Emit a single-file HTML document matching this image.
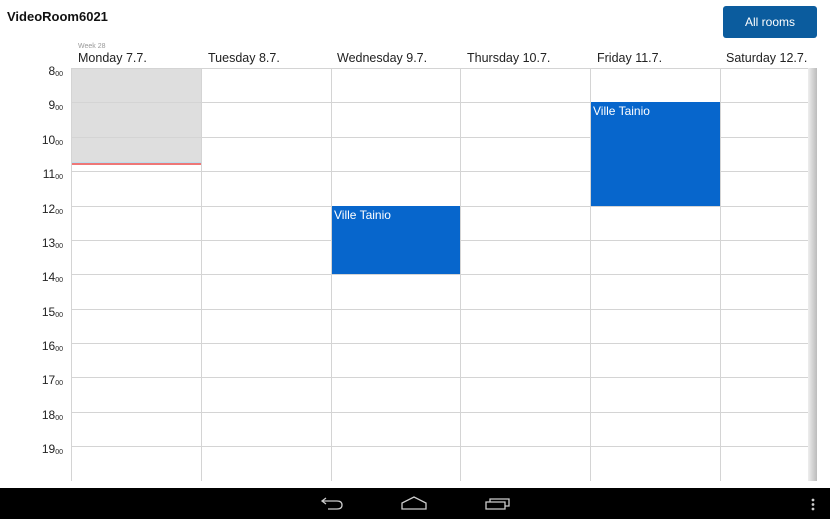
<!DOCTYPE html>
<html><head><meta charset="utf-8"><style>
body{margin:0;width:830px;height:519px;overflow:hidden;background:#fff;font-family:"Liberation Sans",sans-serif;position:relative}
.a{position:absolute}
.h{font-size:12px;color:#222}
.h sup{font-size:7px;vertical-align:-1px}
</style></head><body>
<div class="a" style="left:7px;top:9px;font-size:13px;font-weight:bold;color:#111">VideoRoom6021</div>
<div class="a" style="left:723px;top:6px;width:94px;height:32px;background:#0b5c9e;border-radius:3px;color:#fff;font-size:12px;text-align:center;line-height:32px">All rooms</div>
<div class="a" style="left:78px;top:43px;font-size:7px;color:#999">Week 28</div>
<div class="a" style="left:78px;top:51px;font-size:12.5px;color:#222">Monday 7.7.</div>
<div class="a" style="left:208px;top:51px;font-size:12.5px;color:#222">Tuesday 8.7.</div>
<div class="a" style="left:337px;top:51px;font-size:12.5px;color:#222">Wednesday 9.7.</div>
<div class="a" style="left:467px;top:51px;font-size:12.5px;color:#222">Thursday 10.7.</div>
<div class="a" style="left:597px;top:51px;font-size:12.5px;color:#222">Friday 11.7.</div>
<div class="a" style="left:726px;top:51px;font-size:12.5px;color:#222">Saturday 12.7.</div>
<div class="a" style="left:72px;top:68px;width:129px;height:95px;background:#dedede"></div>
<svg class="a" style="left:0;top:0" width="830" height="519">
<g stroke="#d4d4d4" stroke-width="1">
<line x1="71" y1="68.5" x2="808" y2="68.5"/>
<line x1="71" y1="102.5" x2="808" y2="102.5"/><line x1="71" y1="137.5" x2="808" y2="137.5"/>
<line x1="71" y1="171.5" x2="808" y2="171.5"/><line x1="71" y1="206.5" x2="808" y2="206.5"/>
<line x1="71" y1="240.5" x2="808" y2="240.5"/><line x1="71" y1="274.5" x2="808" y2="274.5"/>
<line x1="71" y1="309.5" x2="808" y2="309.5"/><line x1="71" y1="343.5" x2="808" y2="343.5"/>
<line x1="71" y1="377.5" x2="808" y2="377.5"/><line x1="71" y1="412.5" x2="808" y2="412.5"/>
<line x1="71" y1="446.5" x2="808" y2="446.5"/>
<line x1="71.5" y1="68" x2="71.5" y2="481"/><line x1="201.5" y1="68" x2="201.5" y2="481"/>
<line x1="331.5" y1="68" x2="331.5" y2="481"/><line x1="460.5" y1="68" x2="460.5" y2="481"/>
<line x1="590.5" y1="68" x2="590.5" y2="481"/><line x1="720.5" y1="68" x2="720.5" y2="481"/>
</g>
<line x1="72" y1="162.5" x2="201" y2="162.5" stroke="#bde" stroke-width="1"/>
<line x1="72" y1="164" x2="201" y2="164" stroke="#e77" stroke-width="2"/>
<defs><linearGradient id="g"><stop offset="0" stop-color="#eee"/><stop offset="1" stop-color="#bbb"/></linearGradient></defs>
<rect x="808" y="68" width="9" height="413" fill="url(#g)"/>
</svg>
<div class="a" style="left:332px;top:206px;width:128px;height:68px;background:#0766cc;color:#fff;font-size:12px;padding:2px 0 0 2px;box-sizing:border-box">Ville Tainio</div>
<div class="a" style="left:591px;top:102px;width:129px;height:104px;background:#0766cc;color:#fff;font-size:12px;padding:2px 0 0 2px;box-sizing:border-box">Ville Tainio</div>
<div class="h a" style="right:767px;top:64px">8<sup>00</sup></div>
<div class="h a" style="right:767px;top:98px">9<sup>00</sup></div>
<div class="h a" style="right:767px;top:133px">10<sup>00</sup></div>
<div class="h a" style="right:767px;top:167px">11<sup>00</sup></div>
<div class="h a" style="right:767px;top:202px">12<sup>00</sup></div>
<div class="h a" style="right:767px;top:236px">13<sup>00</sup></div>
<div class="h a" style="right:767px;top:270px">14<sup>00</sup></div>
<div class="h a" style="right:767px;top:305px">15<sup>00</sup></div>
<div class="h a" style="right:767px;top:339px">16<sup>00</sup></div>
<div class="h a" style="right:767px;top:373px">17<sup>00</sup></div>
<div class="h a" style="right:767px;top:408px">18<sup>00</sup></div>
<div class="h a" style="right:767px;top:442px">19<sup>00</sup></div>
<div class="a" style="left:0;top:488px;width:830px;height:31px;background:#000"></div>
<svg class="a" style="left:0;top:488px" width="830" height="31" fill="none" stroke="#ccc" stroke-width="1.3">
<path d="M326 10 L322 13 L326 16 M322 13 H337 Q342 13 342 17 Q342 21 337 21 H328"/>
<path d="M402 21 H426 V15 L414 9 L402 15 Z"/>
<path d="M486 14 H505 V21 H486 Z M490 14 V11 H509 V18 H505"/>
<g fill="#ccc" stroke="none"><circle cx="813" cy="12" r="1.4"/><circle cx="813" cy="16.5" r="1.4"/><circle cx="813" cy="21" r="1.4"/></g>
</svg>
</body></html>
